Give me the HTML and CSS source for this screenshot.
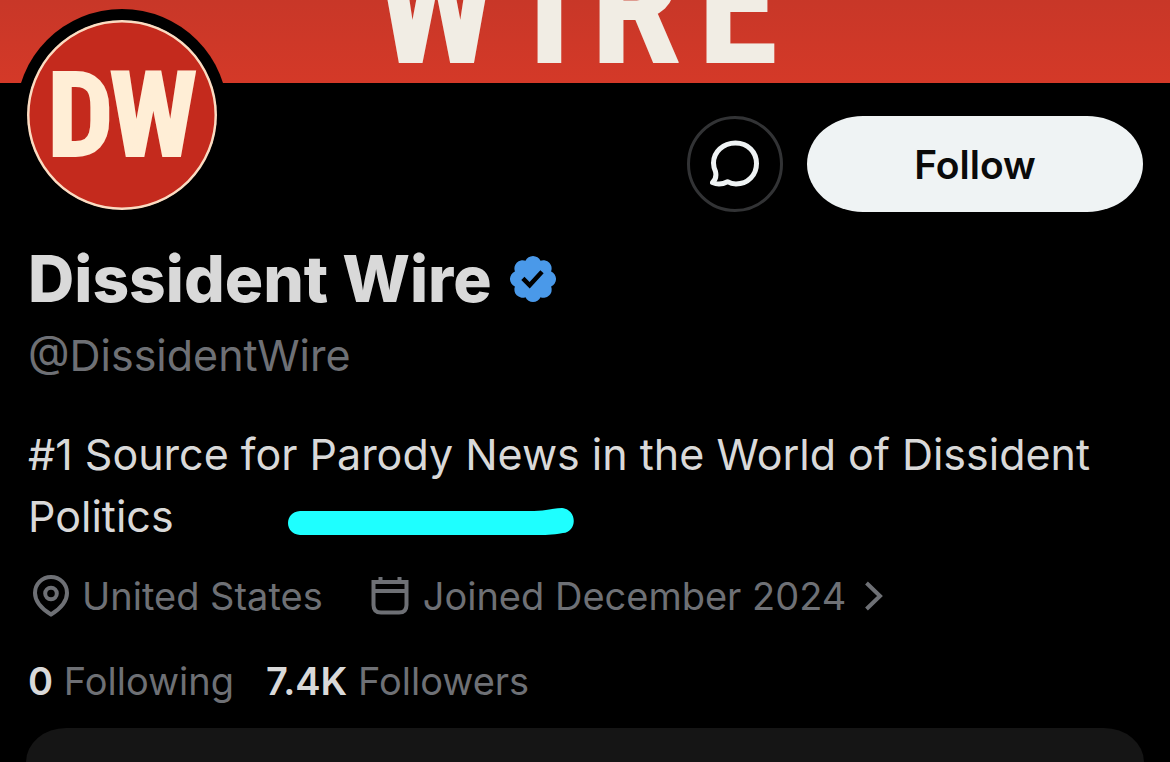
FILE: index.html
```html
<!DOCTYPE html>
<html lang="en">
<head>
<meta charset="utf-8">
<meta name="viewport" content="width=device-width, initial-scale=1">
<title>Dissident Wire</title>
<link rel="stylesheet" href="styles.css">
</head>
<body>
<header class="banner">
  <svg class="banner-art" viewBox="0 0 1170 83" preserveAspectRatio="xMidYMax slice" role="img" aria-label="Wire">
    <defs>
      <linearGradient id="banner-red" x1="0" y1="0" x2="0" y2="1">
        <stop offset="0" stop-color="#c83728"/>
        <stop offset="1" stop-color="#d43928"/>
      </linearGradient>
    </defs>
    <rect width="1170" height="83" fill="url(#banner-red)"/>
    <text class="banner-word" y="63" x="374 527 590 697">WIRE</text>
  </svg>
</header>
<main class="profile">
  <div class="top">
    <svg class="avatar" viewBox="0 0 190 190" role="img" aria-label="DW">
      <circle cx="95" cy="95" r="94" fill="#c42a1d" stroke="#fbdcc2" stroke-width="3"/>
      <text class="avatar-word" x="20 82" y="136">DW</text>
    </svg>
    <div class="actions">
      <button class="message" type="button" aria-label="Message">
        <svg class="message-icon" viewBox="0 0 50 48" aria-hidden="true">
          <path d="M25.500 3C38 3 46.500 12 46.500 23.500C46.500 35 38 44 26 44C22.500 44 20 43.200 17.500 41.700C13 44 8 45 2.500 42.500C6 39.500 6.500 36 5.500 31.500C4.200 28.500 3.500 26 3.500 23C3.500 12 13 3 25.500 3Z"/>
        </svg>
      </button>
      <button class="follow" type="button">Follow</button>
    </div>
  </div>
  <div class="name-row">
    <h1 class="name">Dissident Wire</h1>
    <svg class="badge" viewBox="0 0 22 22" role="img" aria-label="Verified">
      <path d="M20.396 11c-.018-.646-.215-1.275-.57-1.816-.354-.54-.852-.972-1.438-1.246.223-.607.27-1.264.14-1.897-.131-.634-.437-1.218-.882-1.687-.47-.445-1.053-.75-1.687-.882-.633-.13-1.29-.083-1.897.14-.273-.587-.704-1.086-1.245-1.44S11.647 1.62 11 1.604c-.646.017-1.273.213-1.813.568s-.969.854-1.24 1.44c-.608-.223-1.267-.272-1.902-.14-.635.13-1.22.436-1.69.882-.445.47-.749 1.055-.878 1.688-.13.633-.08 1.29.144 1.896-.587.274-1.087.705-1.443 1.245-.356.54-.555 1.17-.574 1.817.02.647.218 1.276.574 1.817.356.54.856.972 1.443 1.245-.224.606-.274 1.263-.144 1.896.13.634.433 1.218.877 1.688.47.443 1.054.747 1.687.878.633.132 1.29.084 1.897-.136.274.586.705 1.084 1.246 1.439.54.354 1.17.551 1.816.569.647-.016 1.276-.213 1.817-.567s.972-.854 1.245-1.44c.604.239 1.266.296 1.903.164.636-.132 1.22-.447 1.68-.907.46-.46.776-1.044.908-1.681s.075-1.299-.165-1.903c.586-.274 1.084-.705 1.439-1.246.354-.54.551-1.17.569-1.816zM9.662 14.85l-3.429-3.428 1.293-1.302 2.072 2.072 4.4-4.794 1.347 1.246z"/>
    </svg>
  </div>
  <p class="handle">@DissidentWire</p>
  <div class="bio">
    <p class="bio-text">#1 Source for Parody News in the World of Dissident Politics</p>
    <svg class="marker" viewBox="0 0 286 28" aria-hidden="true">
      <path d="M12 3H246C259 3 264 0 274 0C290 2 289 24 275 25C263 27 259 27 244 27H12C-4 26 -4 4 12 3Z"/>
    </svg>
  </div>
  <div class="meta">
    <span class="meta-item location">
      <svg class="pin-icon" viewBox="0 0 38 42" aria-hidden="true">
        <path d="M19 2C28 2 35 9 35 18C35 27 28 34 19 39.500C10 34 3 27 3 18C3 9 10 2 19 2Z"/>
        <circle cx="19" cy="18.500" r="5.800"/>
      </svg>
      United States
    </span>
    <a class="meta-item" href="#joined">
      <svg class="calendar-icon" viewBox="0 0 38 38" aria-hidden="true">
        <path d="M2.500 5H35.500V28Q35.500 35.500 28 35.500H10Q2.500 35.500 2.500 28ZM2.500 14H35.500M9.500 0V5M28.500 0V5"/>
      </svg>
      Joined December 2024
      <svg class="chevron-icon" viewBox="0 0 20 30" aria-hidden="true"><path d="M2.500 2L16 15L2.500 28"/></svg>
    </a>
  </div>
  <nav class="stats">
    <a class="stat" href="#following"><strong class="count">0</strong> Following</a>
    <a class="stat" href="#followers"><strong class="count">7.4K</strong> Followers</a>
  </nav>
  <section class="panel" aria-label="More"></section>
</main>
</body>
</html>
```
FILE: styles.css
```css
* {
  box-sizing: border-box;
}

body {
  display: flex;
  flex-direction: column;
  min-height: 100vh;
  margin: 0;
  background: #000;
  color: #d9d9d9;
  font-family: Inter, "Liberation Sans", sans-serif;
}

h1,
p {
  margin: 0;
}

a {
  color: inherit;
  text-decoration: none;
}

.banner {
  height: 83px;
  background: #cf3828;
}

.banner-art {
  display: block;
  width: 100%;
  height: 100%;
}

.banner-word {
  fill: #f1ede4;
  font: bold 166px "Liberation Sans Narrow", "Roboto Condensed", Roboto, sans-serif;
}

.profile {
  display: flex;
  flex: 1;
  flex-direction: column;
  padding: 0 28px;
}

.top {
  display: flex;
  justify-content: space-between;
  align-items: flex-end;
  margin: -74px 0 0 -12px;
}

.avatar {
  width: 212px;
  height: 212px;
  padding: 11px;
  border-radius: 50%;
  background: #000;
}

.avatar-word {
  fill: #ffeed6;
  stroke: #ffeed6;
  stroke-width: 2px;
  font: bold 118px "Liberation Sans Narrow", "Roboto Condensed", Roboto, sans-serif;
}

.actions {
  display: flex;
  gap: 24px;
  margin-bottom: 9px;
}

.message,
.follow {
  height: 96px;
  padding: 0;
  cursor: pointer;
}

.message {
  display: grid;
  place-items: center;
  width: 96px;
  border: 3px solid #323335;
  border-radius: 50%;
  background: none;
}

.message-icon {
  width: 50px;
  height: 48px;
  fill: none;
  stroke: #eff3f4;
  stroke-width: 5;
  stroke-linejoin: round;
}

.follow {
  width: 336px;
  margin-right: -1px;
  border: 0;
  border-radius: 56px / 48px;
  background: #eff3f4;
  color: #0a0a0a;
  font: 600 39px Inter, "Liberation Sans", sans-serif;
}

.name-row {
  display: flex;
  align-items: center;
  gap: 14px;
  margin-top: 20px;
}

.name {
  font-size: 64px;
  line-height: 76px;
  font-weight: 800;
}

.badge {
  width: 54px;
  height: 54px;
  fill: #4a99e9;
}

.handle {
  margin-top: 10px;
  color: #6e7075;
  font-size: 43px;
  line-height: 56px;
}

.bio {
  position: relative;
  margin-top: 40px;
}

.bio-text {
  font-size: 43px;
  line-height: 62px;
}

.marker {
  position: absolute;
  left: 260px;
  bottom: 11px;
  width: 286px;
  height: 28px;
  fill: #1effff;
}

.meta {
  display: flex;
  gap: 48px;
  margin-top: 25px;
  color: #6e7075;
  font-size: 38px;
  line-height: 48px;
}

.meta-item {
  display: flex;
  align-items: center;
  gap: 14px;
}

.location {
  gap: 12px;
}

.meta svg {
  fill: none;
  stroke: currentColor;
  stroke-width: 4;
}

.pin-icon {
  width: 38px;
  height: 42px;
  margin-left: 4px;
}

.calendar-icon {
  width: 38px;
  height: 38px;
}

.chevron-icon {
  width: 20px;
  height: 30px;
  margin-left: 4px;
}

.stats {
  display: flex;
  gap: 32px;
  margin-top: 37px;
  color: #6e7075;
  font-size: 38px;
  line-height: 48px;
}

.count {
  color: #d9d9d9;
  font-weight: 600;
}

.panel {
  flex: 1;
  margin: 23px -2px 0;
  border-radius: 52px 52px 0 0 / 44px 44px 0 0;
  background: #151515;
}
```
